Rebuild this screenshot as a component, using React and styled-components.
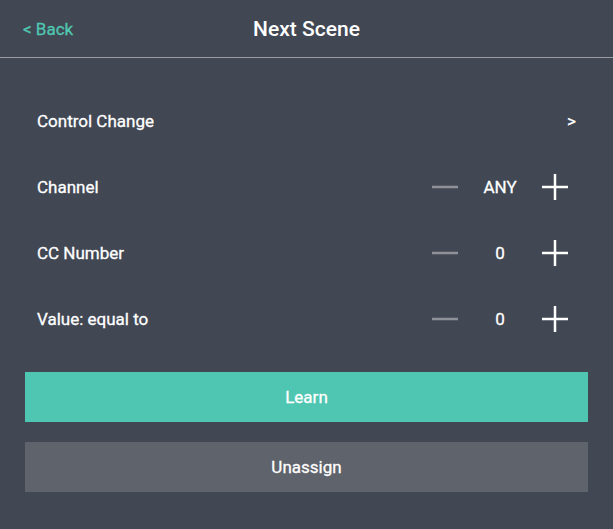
import React from 'react'
import styled, { createGlobalStyle } from 'styled-components'

const Global = createGlobalStyle`
  html, body {
    margin: 0;
    padding: 0;
    background: #414753;
  }
  body {
    font-family: Roboto, "Liberation Sans", sans-serif;
    color: #fff;
  }
`

const Page = styled.div`
  width: 613px;
  height: 529px;
  background: #414753;
`

const Header = styled.div`
  height: 57px;
  border-bottom: 1px solid #9a9ca2;
  display: grid;
  grid-template-columns: 1fr auto 1fr;
  align-items: center;
  padding: 0 23px;
`

const Back = styled.div`
  color: #4fc6b0;
  font-size: 17px;
  font-weight: 400;
  -webkit-text-stroke: 0.3px #4fc6b0;
`

const Title = styled.div`
  font-size: 21px;
  font-weight: 500;
  color: #fff;
`

const Body = styled.div`
  padding: 30px 25px 0;
`

const Row = styled.div`
  height: 66px;
  display: flex;
  align-items: center;
  justify-content: space-between;
  padding: 0 ${p => (p.$arrow ? 12 : 20)}px 0 12px;
  font-size: 17px;
  font-weight: 400;
  -webkit-text-stroke: 0.3px #fff;
`

const Stepper = styled.div`
  display: flex;
  align-items: center;
`

const Value = styled.div`
  width: 84px;
  text-align: center;
`

const Buttons = styled.div`
  display: flex;
  flex-direction: column;
  gap: 20px;
  margin-top: 20px;
`

const Button = styled.div`
  height: 50px;
  display: flex;
  align-items: center;
  justify-content: center;
  background: ${p => (p.$primary ? '#4fc6b1' : '#5f636b')};
  font-size: 17px;
  font-weight: 400;
  -webkit-text-stroke: 0.3px #fff;
  color: #fff;
`

const Minus = () => (
  <svg width="26" height="26" viewBox="0 0 26 26">
    <line x1="0" y1="13" x2="26" y2="13" stroke="#8e9198" strokeWidth="2.5" />
  </svg>
)

const Plus = () => (
  <svg width="26" height="26" viewBox="0 0 26 26">
    <line x1="0" y1="13" x2="26" y2="13" stroke="#fff" strokeWidth="2.5" />
    <line x1="13" y1="0" x2="13" y2="26" stroke="#fff" strokeWidth="2.5" />
  </svg>
)

const steps = [
  { label: 'Channel', value: 'ANY' },
  { label: 'CC Number', value: '0' },
  { label: 'Value: equal to', value: '0' },
]

export default function App() {
  return (
    <Page>
      <Global />
      <Header>
        <Back>&lt; Back</Back>
        <Title>Next Scene</Title>
        <div />
      </Header>
      <Body>
        <Row $arrow>
          <span>Control Change</span>
          <span>&gt;</span>
        </Row>
        {steps.map(s => (
          <Row key={s.label}>
            <span>{s.label}</span>
            <Stepper>
              <Minus />
              <Value>{s.value}</Value>
              <Plus />
            </Stepper>
          </Row>
        ))}
        <Buttons>
          <Button $primary>Learn</Button>
          <Button>Unassign</Button>
        </Buttons>
      </Body>
    </Page>
  )
}
